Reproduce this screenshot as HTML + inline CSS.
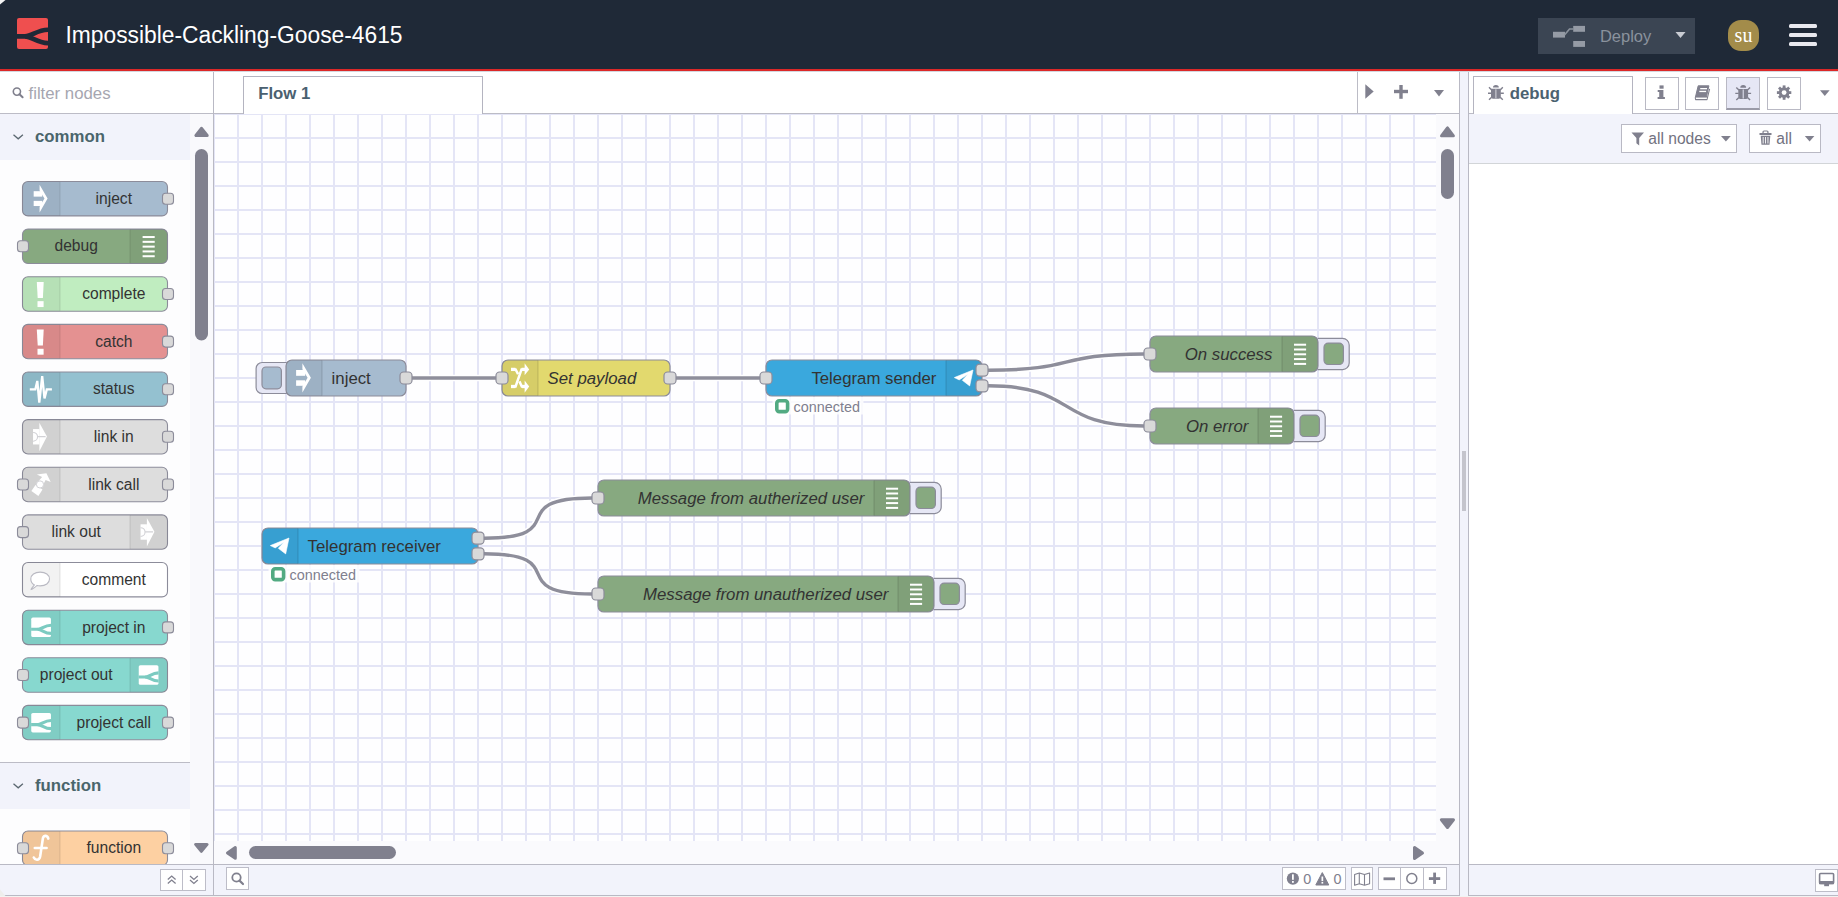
<!DOCTYPE html><html><head><meta charset="utf-8"><style>
*{box-sizing:border-box;margin:0;padding:0}
html,body{width:1838px;height:897px;overflow:hidden;background:#fff;font-family:"Liberation Sans",sans-serif}
.a{position:absolute}
svg text{font-family:"Liberation Sans",sans-serif}
</style></head><body>
<div class="a" style="left:0;top:0;width:1838px;height:69px;background:#1f2937"></div>
<div class="a" style="left:0;top:69px;width:1838px;height:2px;background:#dc2828"></div>
<svg class="a" style="left:17px;top:18px" width="31" height="31" viewBox="0 0 31 31">
<rect x="0" y="0" width="31" height="31" rx="2" fill="#ef4f4f"/>
<path d="M-1 18.35 L8 18.35 C15 18.35 20 11.75 31.5 11.75" stroke="#1f2937" stroke-width="4.7" fill="none"/>
<path d="M8 18.35 C15 18.35 20 25.15 31.5 25.15" stroke="#1f2937" stroke-width="4.7" fill="none"/>
</svg>
<div class="a" id="title" style="left:65.5px;top:20px;color:#fff;font-size:22.8px;line-height:30px;white-space:nowrap;transform:scaleY(1.08);transform-origin:0 23px">Impossible-Cackling-Goose-4615</div>
<div class="a" style="left:1538px;top:18px;width:157px;height:36px;background:#3b4553"></div>
<svg class="a" style="left:1550px;top:24px" width="40" height="26">
<rect x="3" y="7.8" width="12" height="5.8" fill="#959ba5"/>
<rect x="23.2" y="1.9" width="11.8" height="5.9" fill="#959ba5"/>
<rect x="23.2" y="17" width="11.8" height="5.9" fill="#959ba5"/>
<path d="M14.5 11 L19.5 5 L23.5 5" stroke="#8b929c" stroke-width="1.6" fill="none"/>
</svg>
<div class="a" style="left:1599.9px;top:24.9px;color:#8a929d;font-size:16.5px;line-height:22px">Deploy</div>
<svg class="a" style="left:1675px;top:31px" width="11" height="8"><path d="M0.5 1 L10.5 1 L5.5 7 Z" fill="#c9ccd3"/></svg>
<div class="a" style="left:1728px;top:20px;width:31px;height:31px;background:#a38c4a;border-radius:13px"></div>
<div class="a" style="left:1728px;top:20px;width:31px;height:31px;color:#fff;font-family:'Liberation Serif',serif;font-size:20px;line-height:31px;text-align:center">su</div>
<div class="a" style="left:1789px;top:24px;width:28px;height:4.2px;background:#e9e9ef;border-radius:1.5px"></div>
<div class="a" style="left:1789px;top:33px;width:28px;height:4.2px;background:#e9e9ef;border-radius:1.5px"></div>
<div class="a" style="left:1789px;top:41.5px;width:28px;height:4.2px;background:#e9e9ef;border-radius:1.5px"></div>
<div class="a" style="left:0;top:71px;width:213px;height:793px;background:#fdfdfe"></div>
<div class="a" style="left:0;top:71px;width:213px;height:42px;background:#fff"></div>
<div class="a" style="left:0;top:113px;width:213px;height:1px;background:#bcbcc6"></div>
<svg class="a" style="left:10px;top:84px" width="16" height="16">
<circle cx="6.9" cy="7.6" r="3.6" stroke="#7f7f8c" stroke-width="1.6" fill="none"/>
<path d="M9.5 10.2 L12.6 13.2" stroke="#7f7f8c" stroke-width="2" stroke-linecap="round"/>
</svg>
<div class="a" style="left:28.5px;top:83.5px;color:#a6a6b0;font-size:16.8px;line-height:20px">filter nodes</div>
<div class="a" style="left:190px;top:114px;width:23px;height:750px;background:#f9f9fc"></div>
<div class="a" style="left:213px;top:71px;width:1px;height:825px;background:#b9b9c4"></div>
<div class="a" style="left:0;top:114px;width:190px;height:46px;background:#f2f3fb"></div>
<svg class="a" style="left:12px;top:133px" width="12" height="8"><path d="M1.5 1.8 L6.2 5.8 L10.9 1.8" stroke="#5b6770" stroke-width="1.3" fill="none"/></svg>
<div class="a" style="left:35px;top:127px;color:#4a656b;font-weight:bold;font-size:16.8px;line-height:20px">common</div>
<div class="a" style="left:0;top:762px;width:190px;height:1px;background:#bcbcc6"></div>
<div class="a" style="left:0;top:763px;width:190px;height:46px;background:#f2f3fb"></div>
<svg class="a" style="left:12px;top:782px" width="12" height="8"><path d="M1.5 1.8 L6.2 5.8 L10.9 1.8" stroke="#5b6770" stroke-width="1.3" fill="none"/></svg>
<div class="a" style="left:35px;top:776px;color:#4a656b;font-weight:bold;font-size:16.8px;line-height:20px">function</div>
<svg class="a" style="left:190px;top:114px" width="23" height="750"><path d="M5.9 21.5 L17.2 21.5 L11.6 14.3 Z" fill="#80808e" stroke="#80808e" stroke-width="3" stroke-linejoin="round"/><rect x="5" y="35" width="13" height="191.5" rx="6.5" fill="#80808e"/><path d="M5.6 730.4 L17.1 730.4 L11.35 737.3 Z" fill="#80808e" stroke="#80808e" stroke-width="3" stroke-linejoin="round"/></svg>
<svg class="a" style="left:0;top:114px" width="190" height="750" viewBox="0 114 190 750">
<rect x="22.5" y="181.5" width="145.0" height="34.4" rx="5.5" fill="#a6bbcf" stroke="#8c8c9a" stroke-width="1.1"/><path d="M28.0 181.5 L60.0 181.5 L60.0 215.9 L28.0 215.9 Q22.5 215.9 22.5 210.4 L22.5 187.0 Q22.5 181.5 28.0 181.5 Z" fill="#000" fill-opacity="0.05"/><line x1="60.0" y1="182.0" x2="60.0" y2="215.4" stroke="#000" stroke-opacity="0.1" stroke-width="1"/><g transform="translate(41.10 198.70) scale(0.940)" fill="#fff"><rect x="-7.9" y="-8" width="9.1" height="5.8"/><rect x="-7.9" y="2.3" width="9.1" height="5.5"/><path d="M-1.6 -14.8 L6.9 -0.2 L-1.6 14.6 L-1.6 8.6 L3.6 -0.2 L-1.6 -8.8 Z"/></g><text x="113.8" y="203.8" text-anchor="middle" font-size="15.6" fill="#333">inject</text><rect x="162.5" y="193.2" width="11" height="11" rx="3" fill="#d9d9d9" stroke="#8c8c9a" stroke-width="1.1"/>
<rect x="22.5" y="229.1" width="145.0" height="34.4" rx="5.5" fill="#87a980" stroke="#8c8c9a" stroke-width="1.1"/><path d="M130.0 229.1 L162.0 229.1 Q167.5 229.1 167.5 234.6 L167.5 258.0 Q167.5 263.5 162.0 263.5 L130.0 263.5 Z" fill="#000" fill-opacity="0.05"/><line x1="130.0" y1="229.6" x2="130.0" y2="263.0" stroke="#000" stroke-opacity="0.1" stroke-width="1"/><g transform="translate(148.60 246.33) scale(1.000)" fill="#fff"><rect x="-6" y="-10.30" width="12.1" height="2"/><rect x="-6" y="-5.50" width="12.1" height="2"/><rect x="-6" y="-0.70" width="12.1" height="2"/><rect x="-6" y="4.10" width="12.1" height="2"/><rect x="-6" y="8.90" width="12.1" height="2"/></g><text x="76.2" y="251.4" text-anchor="middle" font-size="15.6" fill="#333">debug</text><rect x="17.5" y="240.8" width="11" height="11" rx="3" fill="#d9d9d9" stroke="#8c8c9a" stroke-width="1.1"/>
<rect x="22.5" y="276.8" width="145.0" height="34.4" rx="5.5" fill="#c0edc0" stroke="#8c8c9a" stroke-width="1.1"/><path d="M28.0 276.8 L60.0 276.8 L60.0 311.2 L28.0 311.2 Q22.5 311.2 22.5 305.7 L22.5 282.3 Q22.5 276.8 28.0 276.8 Z" fill="#000" fill-opacity="0.05"/><line x1="60.0" y1="277.3" x2="60.0" y2="310.7" stroke="#000" stroke-opacity="0.1" stroke-width="1"/><g transform="translate(41.10 293.96) scale(1.000)" fill="#fff"><path d="M-4.3 -12 L2.6 -12 L1.8 4 L-3.4 4 Z"/><rect x="-3.6" y="7.2" width="6.1" height="5.9"/></g><text x="113.8" y="299.1" text-anchor="middle" font-size="15.6" fill="#333">complete</text><rect x="162.5" y="288.5" width="11" height="11" rx="3" fill="#d9d9d9" stroke="#8c8c9a" stroke-width="1.1"/>
<rect x="22.5" y="324.4" width="145.0" height="34.4" rx="5.5" fill="#e49191" stroke="#8c8c9a" stroke-width="1.1"/><path d="M28.0 324.4 L60.0 324.4 L60.0 358.8 L28.0 358.8 Q22.5 358.8 22.5 353.3 L22.5 329.9 Q22.5 324.4 28.0 324.4 Z" fill="#000" fill-opacity="0.05"/><line x1="60.0" y1="324.9" x2="60.0" y2="358.3" stroke="#000" stroke-opacity="0.1" stroke-width="1"/><g transform="translate(41.10 341.59) scale(1.000)" fill="#fff"><path d="M-4.3 -12 L2.6 -12 L1.8 4 L-3.4 4 Z"/><rect x="-3.6" y="7.2" width="6.1" height="5.9"/></g><text x="113.8" y="346.7" text-anchor="middle" font-size="15.6" fill="#333">catch</text><rect x="162.5" y="336.1" width="11" height="11" rx="3" fill="#d9d9d9" stroke="#8c8c9a" stroke-width="1.1"/>
<rect x="22.5" y="372.0" width="145.0" height="34.4" rx="5.5" fill="#94c1d0" stroke="#8c8c9a" stroke-width="1.1"/><path d="M28.0 372.0 L60.0 372.0 L60.0 406.4 L28.0 406.4 Q22.5 406.4 22.5 400.9 L22.5 377.5 Q22.5 372.0 28.0 372.0 Z" fill="#000" fill-opacity="0.05"/><line x1="60.0" y1="372.5" x2="60.0" y2="405.9" stroke="#000" stroke-opacity="0.1" stroke-width="1"/><g transform="translate(41.10 389.22) scale(1.000)"><path d="M-11.3 0.2 L-5.8 0.2 L-3.8 -8.3 L-1.8 13.5 L1.1 -13 L3.4 9.2 L5.7 0.2 L10.8 0.2" stroke="#fff" stroke-width="2.3" fill="none" stroke-linejoin="miter" stroke-miterlimit="3"/></g><text x="113.8" y="394.3" text-anchor="middle" font-size="15.6" fill="#333">status</text><rect x="162.5" y="383.7" width="11" height="11" rx="3" fill="#d9d9d9" stroke="#8c8c9a" stroke-width="1.1"/>
<rect x="22.5" y="419.6" width="145.0" height="34.4" rx="5.5" fill="#dddddd" stroke="#8c8c9a" stroke-width="1.1"/><path d="M28.0 419.6 L60.0 419.6 L60.0 454.0 L28.0 454.0 Q22.5 454.0 22.5 448.5 L22.5 425.1 Q22.5 419.6 28.0 419.6 Z" fill="#000" fill-opacity="0.05"/><line x1="60.0" y1="420.1" x2="60.0" y2="453.5" stroke="#000" stroke-opacity="0.1" stroke-width="1"/><g transform="translate(41.10 436.85) scale(1.000)"><rect x="-8.05" y="-7.8" width="6.4" height="15.4" fill="#fff"/><path d="M-1.75 -14.05 L5.85 -0.25 L-1.75 14.3 Z" fill="#fff"/><path d="M-8.05 -4.4 A4.5 4.4 0 0 1 -8.05 4.4 M-3.5 -0.25 H4.5" stroke="#d2d2d6" stroke-width="1.1" fill="none"/></g><text x="113.8" y="441.9" text-anchor="middle" font-size="15.6" fill="#333">link in</text><rect x="162.5" y="431.3" width="11" height="11" rx="3" fill="#d9d9d9" stroke="#8c8c9a" stroke-width="1.1"/>
<rect x="22.5" y="467.3" width="145.0" height="34.4" rx="5.5" fill="#dddddd" stroke="#8c8c9a" stroke-width="1.1"/><path d="M28.0 467.3 L60.0 467.3 L60.0 501.7 L28.0 501.7 Q22.5 501.7 22.5 496.2 L22.5 472.8 Q22.5 467.3 28.0 467.3 Z" fill="#000" fill-opacity="0.05"/><line x1="60.0" y1="467.8" x2="60.0" y2="501.2" stroke="#000" stroke-opacity="0.1" stroke-width="1"/><g transform="translate(41.10 484.48) scale(1.000)" fill="#fff"><path d="M-9.7 6.4 L-2.7 11.45 L1.4 5.05 L-5.6 0.55 Z"/><path d="M-2.5 -3.5 L1 -7.5 L-4.2 -9.95 L5.3 -11.35 L9.6 -2.55 L4.5 -4.6 L1.8 0.8 Z"/><circle cx="-1.1" cy="-0.05" r="3.6" fill="#fff" stroke="#d2d2d6" stroke-width="1"/></g><text x="113.8" y="489.6" text-anchor="middle" font-size="15.6" fill="#333">link call</text><rect x="17.5" y="479.0" width="11" height="11" rx="3" fill="#d9d9d9" stroke="#8c8c9a" stroke-width="1.1"/><rect x="162.5" y="479.0" width="11" height="11" rx="3" fill="#d9d9d9" stroke="#8c8c9a" stroke-width="1.1"/>
<rect x="22.5" y="514.9" width="145.0" height="34.4" rx="5.5" fill="#dddddd" stroke="#8c8c9a" stroke-width="1.1"/><path d="M130.0 514.9 L162.0 514.9 Q167.5 514.9 167.5 520.4 L167.5 543.8 Q167.5 549.3 162.0 549.3 L130.0 549.3 Z" fill="#000" fill-opacity="0.05"/><line x1="130.0" y1="515.4" x2="130.0" y2="548.8" stroke="#000" stroke-opacity="0.1" stroke-width="1"/><g transform="translate(148.60 532.11) scale(1.000)"><rect x="-8.05" y="-7.8" width="6.4" height="15.4" fill="#fff"/><path d="M-1.75 -14.05 L5.85 -0.25 L-1.75 14.3 Z" fill="#fff"/><path d="M-8.05 -4.4 A4.5 4.4 0 0 1 -8.05 4.4 M-3.5 -0.25 H4.5" stroke="#d2d2d6" stroke-width="1.1" fill="none"/></g><text x="76.2" y="537.2" text-anchor="middle" font-size="15.6" fill="#333">link out</text><rect x="17.5" y="526.6" width="11" height="11" rx="3" fill="#d9d9d9" stroke="#8c8c9a" stroke-width="1.1"/>
<rect x="22.5" y="562.5" width="145.0" height="34.4" rx="5.5" fill="#ffffff" stroke="#8c8c9a" stroke-width="1.1"/><path d="M28.0 562.5 L60.0 562.5 L60.0 596.9 L28.0 596.9 Q22.5 596.9 22.5 591.4 L22.5 568.0 Q22.5 562.5 28.0 562.5 Z" fill="#000" fill-opacity="0.05"/><line x1="60.0" y1="563.0" x2="60.0" y2="596.4" stroke="#000" stroke-opacity="0.1" stroke-width="1"/><g transform="translate(41.10 579.74) scale(1.000)"><path d="M-0.95 -7.6 C4.5 -7.6 8.4 -4.8 8.4 -0.75 C8.4 3.3 4.5 6.1 -0.95 6.1 C-2 6.1 -3 6 -4 5.7 C-6 7.5 -8.5 9.6 -10 9.8 C-10.3 9.3 -9 8 -6.7 5.2 C-9 3.9 -10.3 1.8 -10.3 -0.75 C-10.3 -4.8 -6.4 -7.6 -0.95 -7.6 Z" stroke="#b9b9c2" stroke-width="1.1" fill="#fff"/></g><text x="113.8" y="584.8" text-anchor="middle" font-size="15.6" fill="#333">comment</text>
<rect x="22.5" y="610.2" width="145.0" height="34.4" rx="5.5" fill="#87d8cf" stroke="#8c8c9a" stroke-width="1.1"/><path d="M28.0 610.2 L60.0 610.2 L60.0 644.6 L28.0 644.6 Q22.5 644.6 22.5 639.1 L22.5 615.7 Q22.5 610.2 28.0 610.2 Z" fill="#000" fill-opacity="0.05"/><line x1="60.0" y1="610.7" x2="60.0" y2="644.1" stroke="#000" stroke-opacity="0.1" stroke-width="1"/><g transform="translate(41.10 627.37) scale(1.000)"><rect x="-9.85" y="-9.75" width="19.7" height="19.5" rx="1.6" fill="#fff"/><path d="M-10 1.95 L-3 1.95 C1 1.95 3 -2.1 10 -2.1" stroke="#7ccbc1" stroke-width="3.1" fill="none"/><path d="M-3.5 1.95 C1 1.95 3 6 10 6" stroke="#7ccbc1" stroke-width="3.1" fill="none"/></g><text x="113.8" y="632.5" text-anchor="middle" font-size="15.6" fill="#333">project in</text><rect x="162.5" y="621.9" width="11" height="11" rx="3" fill="#d9d9d9" stroke="#8c8c9a" stroke-width="1.1"/>
<rect x="22.5" y="657.8" width="145.0" height="34.4" rx="5.5" fill="#87d8cf" stroke="#8c8c9a" stroke-width="1.1"/><path d="M130.0 657.8 L162.0 657.8 Q167.5 657.8 167.5 663.3 L167.5 686.7 Q167.5 692.2 162.0 692.2 L130.0 692.2 Z" fill="#000" fill-opacity="0.05"/><line x1="130.0" y1="658.3" x2="130.0" y2="691.7" stroke="#000" stroke-opacity="0.1" stroke-width="1"/><g transform="translate(148.60 675.00) scale(1.000)"><rect x="-9.85" y="-9.75" width="19.7" height="19.5" rx="1.6" fill="#fff"/><path d="M-10 1.95 L-3 1.95 C1 1.95 3 -2.1 10 -2.1" stroke="#7ccbc1" stroke-width="3.1" fill="none"/><path d="M-3.5 1.95 C1 1.95 3 6 10 6" stroke="#7ccbc1" stroke-width="3.1" fill="none"/></g><text x="76.2" y="680.1" text-anchor="middle" font-size="15.6" fill="#333">project out</text><rect x="17.5" y="669.5" width="11" height="11" rx="3" fill="#d9d9d9" stroke="#8c8c9a" stroke-width="1.1"/>
<rect x="22.5" y="705.4" width="145.0" height="34.4" rx="5.5" fill="#87d8cf" stroke="#8c8c9a" stroke-width="1.1"/><path d="M28.0 705.4 L60.0 705.4 L60.0 739.8 L28.0 739.8 Q22.5 739.8 22.5 734.3 L22.5 710.9 Q22.5 705.4 28.0 705.4 Z" fill="#000" fill-opacity="0.05"/><line x1="60.0" y1="705.9" x2="60.0" y2="739.3" stroke="#000" stroke-opacity="0.1" stroke-width="1"/><g transform="translate(41.10 722.63) scale(1.000)"><rect x="-9.85" y="-9.75" width="19.7" height="19.5" rx="1.6" fill="#fff"/><path d="M-10 1.95 L-3 1.95 C1 1.95 3 -2.1 10 -2.1" stroke="#7ccbc1" stroke-width="3.1" fill="none"/><path d="M-3.5 1.95 C1 1.95 3 6 10 6" stroke="#7ccbc1" stroke-width="3.1" fill="none"/></g><text x="113.8" y="727.7" text-anchor="middle" font-size="15.6" fill="#333">project call</text><rect x="17.5" y="717.1" width="11" height="11" rx="3" fill="#d9d9d9" stroke="#8c8c9a" stroke-width="1.1"/><rect x="162.5" y="717.1" width="11" height="11" rx="3" fill="#d9d9d9" stroke="#8c8c9a" stroke-width="1.1"/>
<rect x="22.5" y="831.0" width="145.0" height="34.4" rx="5.5" fill="#fdd0a2" stroke="#8c8c9a" stroke-width="1.1"/><path d="M28.0 831.0 L60.0 831.0 L60.0 865.4 L28.0 865.4 Q22.5 865.4 22.5 859.9 L22.5 836.5 Q22.5 831.0 28.0 831.0 Z" fill="#000" fill-opacity="0.05"/><line x1="60.0" y1="831.5" x2="60.0" y2="864.9" stroke="#000" stroke-opacity="0.1" stroke-width="1"/><g transform="translate(41.10 848.20) scale(1.000)"><path d="M7.2 -9.6 C6.5 -12.8 3 -13.6 1.8 -10 L-1 8.5 C-2 12.5 -6 12.2 -7.3 9.3 M-6.3 -0.2 H5.5" stroke="#fff" stroke-width="2.6" fill="none" stroke-linecap="round"/></g><text x="113.8" y="853.3" text-anchor="middle" font-size="15.6" fill="#333">function</text><rect x="17.5" y="842.7" width="11" height="11" rx="3" fill="#d9d9d9" stroke="#8c8c9a" stroke-width="1.1"/><rect x="162.5" y="842.7" width="11" height="11" rx="3" fill="#d9d9d9" stroke="#8c8c9a" stroke-width="1.1"/>
</svg>
<div class="a" style="left:214px;top:71px;width:1245px;height:42px;background:#fff"></div>
<div class="a" style="left:214px;top:113px;width:1245px;height:1px;background:#bcbcc6"></div>
<div class="a" style="left:243px;top:76px;width:240px;height:38px;background:#fff;border:1px solid #b4b4c0;border-bottom:none"></div>
<div class="a" style="left:258.2px;top:84px;color:#4a6070;font-weight:bold;font-size:16.8px;line-height:20px">Flow 1</div>
<div class="a" style="left:1357px;top:71px;width:1px;height:42px;background:#bcbcc6"></div>
<svg class="a" style="left:1358px;top:71px" width="101" height="42"><path d="M7.3 13.3 L15.7 20.5 L7.3 27.8 Z" fill="#80808e"/><rect x="36" y="18.8" width="14" height="3.4" fill="#80808e"/><rect x="41.3" y="14" width="3.4" height="13.8" fill="#80808e"/><path d="M76 19 L86 19 L81 25.5 Z" fill="#80808e"/></svg>
<svg class="a" style="left:214px;top:114px" width="1245" height="750" viewBox="214 114 1245 750">
<rect x="214" y="114" width="1245" height="750" fill="#fafafd"/>
<rect x="214" y="114" width="1222" height="727" fill="#fefeff"/>
<rect x="213" y="114" width="2" height="727" fill="#e4e5f6"/><rect x="237" y="114" width="2" height="727" fill="#e4e5f6"/><rect x="261" y="114" width="2" height="727" fill="#e4e5f6"/><rect x="285" y="114" width="2" height="727" fill="#e4e5f6"/><rect x="309" y="114" width="2" height="727" fill="#e4e5f6"/><rect x="333" y="114" width="2" height="727" fill="#e4e5f6"/><rect x="357" y="114" width="2" height="727" fill="#e4e5f6"/><rect x="381" y="114" width="2" height="727" fill="#e4e5f6"/><rect x="405" y="114" width="2" height="727" fill="#e4e5f6"/><rect x="429" y="114" width="2" height="727" fill="#e4e5f6"/><rect x="453" y="114" width="2" height="727" fill="#e4e5f6"/><rect x="477" y="114" width="2" height="727" fill="#e4e5f6"/><rect x="501" y="114" width="2" height="727" fill="#e4e5f6"/><rect x="525" y="114" width="2" height="727" fill="#e4e5f6"/><rect x="549" y="114" width="2" height="727" fill="#e4e5f6"/><rect x="573" y="114" width="2" height="727" fill="#e4e5f6"/><rect x="597" y="114" width="2" height="727" fill="#e4e5f6"/><rect x="621" y="114" width="2" height="727" fill="#e4e5f6"/><rect x="645" y="114" width="2" height="727" fill="#e4e5f6"/><rect x="669" y="114" width="2" height="727" fill="#e4e5f6"/><rect x="693" y="114" width="2" height="727" fill="#e4e5f6"/><rect x="717" y="114" width="2" height="727" fill="#e4e5f6"/><rect x="741" y="114" width="2" height="727" fill="#e4e5f6"/><rect x="765" y="114" width="2" height="727" fill="#e4e5f6"/><rect x="789" y="114" width="2" height="727" fill="#e4e5f6"/><rect x="813" y="114" width="2" height="727" fill="#e4e5f6"/><rect x="837" y="114" width="2" height="727" fill="#e4e5f6"/><rect x="861" y="114" width="2" height="727" fill="#e4e5f6"/><rect x="885" y="114" width="2" height="727" fill="#e4e5f6"/><rect x="909" y="114" width="2" height="727" fill="#e4e5f6"/><rect x="933" y="114" width="2" height="727" fill="#e4e5f6"/><rect x="957" y="114" width="2" height="727" fill="#e4e5f6"/><rect x="981" y="114" width="2" height="727" fill="#e4e5f6"/><rect x="1005" y="114" width="2" height="727" fill="#e4e5f6"/><rect x="1029" y="114" width="2" height="727" fill="#e4e5f6"/><rect x="1053" y="114" width="2" height="727" fill="#e4e5f6"/><rect x="1077" y="114" width="2" height="727" fill="#e4e5f6"/><rect x="1101" y="114" width="2" height="727" fill="#e4e5f6"/><rect x="1125" y="114" width="2" height="727" fill="#e4e5f6"/><rect x="1149" y="114" width="2" height="727" fill="#e4e5f6"/><rect x="1173" y="114" width="2" height="727" fill="#e4e5f6"/><rect x="1197" y="114" width="2" height="727" fill="#e4e5f6"/><rect x="1221" y="114" width="2" height="727" fill="#e4e5f6"/><rect x="1245" y="114" width="2" height="727" fill="#e4e5f6"/><rect x="1269" y="114" width="2" height="727" fill="#e4e5f6"/><rect x="1293" y="114" width="2" height="727" fill="#e4e5f6"/><rect x="1317" y="114" width="2" height="727" fill="#e4e5f6"/><rect x="1341" y="114" width="2" height="727" fill="#e4e5f6"/><rect x="1365" y="114" width="2" height="727" fill="#e4e5f6"/><rect x="1389" y="114" width="2" height="727" fill="#e4e5f6"/><rect x="1413" y="114" width="2" height="727" fill="#e4e5f6"/><rect x="214" y="113" width="1222" height="2" fill="#e4e5f6"/><rect x="214" y="137" width="1222" height="2" fill="#e4e5f6"/><rect x="214" y="161" width="1222" height="2" fill="#e4e5f6"/><rect x="214" y="185" width="1222" height="2" fill="#e4e5f6"/><rect x="214" y="209" width="1222" height="2" fill="#e4e5f6"/><rect x="214" y="233" width="1222" height="2" fill="#e4e5f6"/><rect x="214" y="257" width="1222" height="2" fill="#e4e5f6"/><rect x="214" y="281" width="1222" height="2" fill="#e4e5f6"/><rect x="214" y="305" width="1222" height="2" fill="#e4e5f6"/><rect x="214" y="329" width="1222" height="2" fill="#e4e5f6"/><rect x="214" y="353" width="1222" height="2" fill="#e4e5f6"/><rect x="214" y="377" width="1222" height="2" fill="#e4e5f6"/><rect x="214" y="401" width="1222" height="2" fill="#e4e5f6"/><rect x="214" y="425" width="1222" height="2" fill="#e4e5f6"/><rect x="214" y="449" width="1222" height="2" fill="#e4e5f6"/><rect x="214" y="473" width="1222" height="2" fill="#e4e5f6"/><rect x="214" y="497" width="1222" height="2" fill="#e4e5f6"/><rect x="214" y="521" width="1222" height="2" fill="#e4e5f6"/><rect x="214" y="545" width="1222" height="2" fill="#e4e5f6"/><rect x="214" y="569" width="1222" height="2" fill="#e4e5f6"/><rect x="214" y="593" width="1222" height="2" fill="#e4e5f6"/><rect x="214" y="617" width="1222" height="2" fill="#e4e5f6"/><rect x="214" y="641" width="1222" height="2" fill="#e4e5f6"/><rect x="214" y="665" width="1222" height="2" fill="#e4e5f6"/><rect x="214" y="689" width="1222" height="2" fill="#e4e5f6"/><rect x="214" y="713" width="1222" height="2" fill="#e4e5f6"/><rect x="214" y="737" width="1222" height="2" fill="#e4e5f6"/><rect x="214" y="761" width="1222" height="2" fill="#e4e5f6"/><rect x="214" y="785" width="1222" height="2" fill="#e4e5f6"/><rect x="214" y="809" width="1222" height="2" fill="#e4e5f6"/><rect x="214" y="833" width="1222" height="2" fill="#e4e5f6"/>
<path d="M412.0 378.0 C502.0 378.0 410.0 378.0 500.0 378.0" stroke="#fefeff" stroke-width="6.5" fill="none"/><path d="M412.0 378.0 C502.0 378.0 410.0 378.0 500.0 378.0" stroke="#8e8e9b" stroke-width="3.4" fill="none"/>
<path d="M670.0 378.0 C760.0 378.0 670.0 378.0 760.0 378.0" stroke="#fefeff" stroke-width="6.5" fill="none"/><path d="M670.0 378.0 C760.0 378.0 670.0 378.0 760.0 378.0" stroke="#8e8e9b" stroke-width="3.4" fill="none"/>
<path d="M988.0 370.2 C1078.0 370.2 1054.0 354.0 1144.0 354.0" stroke="#fefeff" stroke-width="6.5" fill="none"/><path d="M988.0 370.2 C1078.0 370.2 1054.0 354.0 1144.0 354.0" stroke="#8e8e9b" stroke-width="3.4" fill="none"/>
<path d="M988.0 385.8 C1078.0 385.8 1054.0 426.0 1144.0 426.0" stroke="#fefeff" stroke-width="6.5" fill="none"/><path d="M988.0 385.8 C1078.0 385.8 1054.0 426.0 1144.0 426.0" stroke="#8e8e9b" stroke-width="3.4" fill="none"/>
<path d="M484.0 538.2 C574.0 538.2 502.0 498.0 592.0 498.0" stroke="#fefeff" stroke-width="6.5" fill="none"/><path d="M484.0 538.2 C574.0 538.2 502.0 498.0 592.0 498.0" stroke="#8e8e9b" stroke-width="3.4" fill="none"/>
<path d="M484.0 553.8 C574.0 553.8 502.0 594.0 592.0 594.0" stroke="#fefeff" stroke-width="6.5" fill="none"/><path d="M484.0 553.8 C574.0 553.8 502.0 594.0 592.0 594.0" stroke="#8e8e9b" stroke-width="3.4" fill="none"/>
<rect x="256.1" y="362.5" width="35.5" height="31" rx="6" fill="#e6e7f5" stroke="#8c8c9a" stroke-width="1.2"/>
<rect x="262" y="367" width="19.4" height="21.8" rx="4" fill="#a6bbcf" stroke="#8c8c9a" stroke-width="1.2"/>
<rect x="286.00" y="360.00" width="120.00" height="36" rx="6" fill="#a6bbcf" stroke="#8c8c9a" stroke-width="1.2"/><path d="M292.00 360.00 h30 v36 h-30 a6 6 0 0 1 -6 -6 v-24 a6 6 0 0 1 6 -6 Z" fill="#000" fill-opacity="0.05"/><line x1="322.00" y1="360.60" x2="322.00" y2="395.40" stroke="#000" stroke-opacity="0.12" stroke-width="1.2"/><g transform="translate(304.00 378.00) scale(1.000)" fill="#fff"><rect x="-7.9" y="-8" width="9.1" height="5.8"/><rect x="-7.9" y="2.3" width="9.1" height="5.5"/><path d="M-1.6 -14.8 L6.9 -0.2 L-1.6 14.6 L-1.6 8.6 L3.6 -0.2 L-1.6 -8.8 Z"/></g><text x="331.60" y="384.00" text-anchor="start" font-size="16.8" fill="#333">inject</text><rect x="400.00" y="372.00" width="12" height="12" rx="3.6" fill="#d9d9d9" stroke="#8c8c9a" stroke-width="1.2"/>
<rect x="502.00" y="360.00" width="168.00" height="36" rx="6" fill="#e2d96e" stroke="#8c8c9a" stroke-width="1.2"/><path d="M508.00 360.00 h30 v36 h-30 a6 6 0 0 1 -6 -6 v-24 a6 6 0 0 1 6 -6 Z" fill="#000" fill-opacity="0.05"/><line x1="538.00" y1="360.60" x2="538.00" y2="395.40" stroke="#000" stroke-opacity="0.12" stroke-width="1.2"/><g transform="translate(520.00 378.00) scale(1.000)" stroke="#fff" fill="none" stroke-width="3.3"><path d="M-9 8.5 H-4.6"/><path d="M-9 -8.6 H-4.6"/><path d="M1.6 -8.6 H5.2"/><path d="M1.9 8.5 H5.2"/><path d="M-5.6 8.5 L-4.4 8.5 L1.5 -8.6 L2.6 -8.6" stroke-width="2.5"/><path d="M-5.6 -8.6 L-4.4 -8.6 L-1.9 -3.8" stroke-width="2.5"/><path d="M-0.6 3.4 L1.8 8.5 L2.8 8.5" stroke-width="2.5"/><path d="M4.6 -14.7 L9.2 -8.6 L4.6 -2.7 Z" fill="#fff" stroke="none"/><path d="M4.6 2.4 L9.2 8.5 L4.6 14.8 Z" fill="#fff" stroke="none"/></g><text x="547.60" y="384.00" text-anchor="start" font-size="16.8" fill="#333" font-style="italic">Set payload</text><rect x="496.00" y="372.00" width="12" height="12" rx="3.6" fill="#d9d9d9" stroke="#8c8c9a" stroke-width="1.2"/><rect x="664.00" y="372.00" width="12" height="12" rx="3.6" fill="#d9d9d9" stroke="#8c8c9a" stroke-width="1.2"/>
<rect x="766.00" y="360.00" width="216.00" height="36" rx="6" fill="#3aa8dd" stroke="#8c8c9a" stroke-width="1.2"/><path d="M946.00 360.00 h30 a6 6 0 0 1 6 6 v24 a6 6 0 0 1 -6 6 h-30 Z" fill="#000" fill-opacity="0.05"/><line x1="946.00" y1="360.60" x2="946.00" y2="395.40" stroke="#000" stroke-opacity="0.12" stroke-width="1.2"/><g transform="translate(964.00 378.00) scale(1.000)" fill="#fff"><path d="M-9.7 -0.4 L9 -8 L5.7 7.9 L-1.7 2.3 L3.9 -3.7 L-4.8 1.9 Z" stroke="#fff" stroke-width="0.6" stroke-linejoin="round"/></g><text x="936.40" y="384.00" text-anchor="end" font-size="16.8" fill="#333">Telegram sender</text><rect x="760.00" y="372.00" width="12" height="12" rx="3.6" fill="#d9d9d9" stroke="#8c8c9a" stroke-width="1.2"/><rect x="976.00" y="364.20" width="12" height="12" rx="3.6" fill="#d9d9d9" stroke="#8c8c9a" stroke-width="1.2"/><rect x="976.00" y="379.80" width="12" height="12" rx="3.6" fill="#d9d9d9" stroke="#8c8c9a" stroke-width="1.2"/>
<rect x="772.50" y="397.00" width="91" height="17.5" fill="#fff" fill-opacity="0.8"/><rect x="776.80" y="400.80" width="10.8" height="10.8" rx="2.4" fill="#fff" stroke="#52aa82" stroke-width="3.6"/><text x="793.60" y="412.00" font-size="14.4" fill="#80808e">connected</text>
<path d="M1317.60 338.40 h25 a6.6 6.6 0 0 1 6.6 6.6 v18 a6.6 6.6 0 0 1 -6.6 6.6 h-25" fill="#e6e7f5" stroke="#8c8c9a" stroke-width="1.2"/><rect x="1324.00" y="343.10" width="19.4" height="21.4" rx="4.2" fill="#87a980" stroke="#8c8c9a" stroke-width="1.2"/>
<rect x="1150.00" y="336.00" width="168.00" height="36" rx="6" fill="#87a980" stroke="#8c8c9a" stroke-width="1.2"/><path d="M1282.00 336.00 h30 a6 6 0 0 1 6 6 v24 a6 6 0 0 1 -6 6 h-30 Z" fill="#000" fill-opacity="0.05"/><line x1="1282.00" y1="336.60" x2="1282.00" y2="371.40" stroke="#000" stroke-opacity="0.12" stroke-width="1.2"/><g transform="translate(1300.00 354.00) scale(1.000)" fill="#fff"><rect x="-6" y="-10.30" width="12.1" height="2"/><rect x="-6" y="-5.50" width="12.1" height="2"/><rect x="-6" y="-0.70" width="12.1" height="2"/><rect x="-6" y="4.10" width="12.1" height="2"/><rect x="-6" y="8.90" width="12.1" height="2"/></g><text x="1272.40" y="360.00" text-anchor="end" font-size="16.8" fill="#333" font-style="italic">On success</text><rect x="1144.00" y="348.00" width="12" height="12" rx="3.6" fill="#d9d9d9" stroke="#8c8c9a" stroke-width="1.2"/>
<path d="M1293.60 410.40 h25 a6.6 6.6 0 0 1 6.6 6.6 v18 a6.6 6.6 0 0 1 -6.6 6.6 h-25" fill="#e6e7f5" stroke="#8c8c9a" stroke-width="1.2"/><rect x="1300.00" y="415.10" width="19.4" height="21.4" rx="4.2" fill="#87a980" stroke="#8c8c9a" stroke-width="1.2"/>
<rect x="1150.00" y="408.00" width="144.00" height="36" rx="6" fill="#87a980" stroke="#8c8c9a" stroke-width="1.2"/><path d="M1258.00 408.00 h30 a6 6 0 0 1 6 6 v24 a6 6 0 0 1 -6 6 h-30 Z" fill="#000" fill-opacity="0.05"/><line x1="1258.00" y1="408.60" x2="1258.00" y2="443.40" stroke="#000" stroke-opacity="0.12" stroke-width="1.2"/><g transform="translate(1276.00 426.00) scale(1.000)" fill="#fff"><rect x="-6" y="-10.30" width="12.1" height="2"/><rect x="-6" y="-5.50" width="12.1" height="2"/><rect x="-6" y="-0.70" width="12.1" height="2"/><rect x="-6" y="4.10" width="12.1" height="2"/><rect x="-6" y="8.90" width="12.1" height="2"/></g><text x="1248.40" y="432.00" text-anchor="end" font-size="16.8" fill="#333" font-style="italic">On error</text><rect x="1144.00" y="420.00" width="12" height="12" rx="3.6" fill="#d9d9d9" stroke="#8c8c9a" stroke-width="1.2"/>
<rect x="262.00" y="528.00" width="216.00" height="36" rx="6" fill="#3aa8dd" stroke="#8c8c9a" stroke-width="1.2"/><path d="M268.00 528.00 h30 v36 h-30 a6 6 0 0 1 -6 -6 v-24 a6 6 0 0 1 6 -6 Z" fill="#000" fill-opacity="0.05"/><line x1="298.00" y1="528.60" x2="298.00" y2="563.40" stroke="#000" stroke-opacity="0.12" stroke-width="1.2"/><g transform="translate(280.00 546.00) scale(1.000)" fill="#fff"><path d="M-9.7 -0.4 L9 -8 L5.7 7.9 L-1.7 2.3 L3.9 -3.7 L-4.8 1.9 Z" stroke="#fff" stroke-width="0.6" stroke-linejoin="round"/></g><text x="307.60" y="552.00" text-anchor="start" font-size="16.8" fill="#333">Telegram receiver</text><rect x="472.00" y="532.20" width="12" height="12" rx="3.6" fill="#d9d9d9" stroke="#8c8c9a" stroke-width="1.2"/><rect x="472.00" y="547.80" width="12" height="12" rx="3.6" fill="#d9d9d9" stroke="#8c8c9a" stroke-width="1.2"/>
<rect x="268.50" y="565.00" width="91" height="17.5" fill="#fff" fill-opacity="0.8"/><rect x="272.80" y="568.80" width="10.8" height="10.8" rx="2.4" fill="#fff" stroke="#52aa82" stroke-width="3.6"/><text x="289.60" y="580.00" font-size="14.4" fill="#80808e">connected</text>
<path d="M909.60 482.40 h25 a6.6 6.6 0 0 1 6.6 6.6 v18 a6.6 6.6 0 0 1 -6.6 6.6 h-25" fill="#e6e7f5" stroke="#8c8c9a" stroke-width="1.2"/><rect x="916.00" y="487.10" width="19.4" height="21.4" rx="4.2" fill="#87a980" stroke="#8c8c9a" stroke-width="1.2"/>
<rect x="598.00" y="480.00" width="312.00" height="36" rx="6" fill="#87a980" stroke="#8c8c9a" stroke-width="1.2"/><path d="M874.00 480.00 h30 a6 6 0 0 1 6 6 v24 a6 6 0 0 1 -6 6 h-30 Z" fill="#000" fill-opacity="0.05"/><line x1="874.00" y1="480.60" x2="874.00" y2="515.40" stroke="#000" stroke-opacity="0.12" stroke-width="1.2"/><g transform="translate(892.00 498.00) scale(1.000)" fill="#fff"><rect x="-6" y="-10.30" width="12.1" height="2"/><rect x="-6" y="-5.50" width="12.1" height="2"/><rect x="-6" y="-0.70" width="12.1" height="2"/><rect x="-6" y="4.10" width="12.1" height="2"/><rect x="-6" y="8.90" width="12.1" height="2"/></g><text x="864.40" y="504.00" text-anchor="end" font-size="16.8" fill="#333" font-style="italic">Message from autherized user</text><rect x="592.00" y="492.00" width="12" height="12" rx="3.6" fill="#d9d9d9" stroke="#8c8c9a" stroke-width="1.2"/>
<path d="M933.60 578.40 h25 a6.6 6.6 0 0 1 6.6 6.6 v18 a6.6 6.6 0 0 1 -6.6 6.6 h-25" fill="#e6e7f5" stroke="#8c8c9a" stroke-width="1.2"/><rect x="940.00" y="583.10" width="19.4" height="21.4" rx="4.2" fill="#87a980" stroke="#8c8c9a" stroke-width="1.2"/>
<rect x="598.00" y="576.00" width="336.00" height="36" rx="6" fill="#87a980" stroke="#8c8c9a" stroke-width="1.2"/><path d="M898.00 576.00 h30 a6 6 0 0 1 6 6 v24 a6 6 0 0 1 -6 6 h-30 Z" fill="#000" fill-opacity="0.05"/><line x1="898.00" y1="576.60" x2="898.00" y2="611.40" stroke="#000" stroke-opacity="0.12" stroke-width="1.2"/><g transform="translate(916.00 594.00) scale(1.000)" fill="#fff"><rect x="-6" y="-10.30" width="12.1" height="2"/><rect x="-6" y="-5.50" width="12.1" height="2"/><rect x="-6" y="-0.70" width="12.1" height="2"/><rect x="-6" y="4.10" width="12.1" height="2"/><rect x="-6" y="8.90" width="12.1" height="2"/></g><text x="888.40" y="600.00" text-anchor="end" font-size="16.8" fill="#333" font-style="italic">Message from unautherized user</text><rect x="592.00" y="588.00" width="12" height="12" rx="3.6" fill="#d9d9d9" stroke="#8c8c9a" stroke-width="1.2"/>
<path d="M1441.5 135.8 L1453.4 135.8 L1447.45 127.9 Z" fill="#80808e" stroke="#80808e" stroke-width="3" stroke-linejoin="round"/>
<rect x="1441" y="149" width="13" height="50" rx="6.5" fill="#80808e"/>
<path d="M1441.4 819.8 L1453.5 819.8 L1447.45 827.5 Z" fill="#80808e" stroke="#80808e" stroke-width="3" stroke-linejoin="round"/>
<path d="M235.3 847.5 L235.3 858.3 L227.5 852.9 Z" fill="#80808e" stroke="#80808e" stroke-width="3" stroke-linejoin="round"/>
<rect x="249" y="846" width="147" height="13" rx="6.5" fill="#80808e"/>
<path d="M1414.5 847.5 L1414.5 858.5 L1422.5 853 Z" fill="#80808e" stroke="#80808e" stroke-width="3" stroke-linejoin="round"/>
</svg>
<div class="a" style="left:1459px;top:71px;width:10px;height:794px;background:#f2f3fb"></div>
<div class="a" style="left:1459px;top:71px;width:1px;height:825px;background:#b9b9c4"></div>
<div class="a" style="left:1468px;top:71px;width:1px;height:825px;background:#b9b9c4"></div>
<div class="a" style="left:1462px;top:451px;width:4px;height:60px;background:#c4c4cc"></div>
<div class="a" style="left:1469px;top:71px;width:369px;height:42px;background:#fff"></div>
<div class="a" style="left:1469px;top:113px;width:369px;height:1px;background:#bcbcc6"></div>
<div class="a" style="left:1473px;top:76px;width:160px;height:38px;background:#fff;border:1px solid #b4b4c0;border-bottom:none"></div>
<svg class="a" style="left:1480px;top:80px" width="30" height="26"><g transform="translate(15.90 13.80) scale(1.00)"><path d="M-2.95 -6.2 A2.95 2.7 0 0 1 2.95 -6.2 Z" fill="#80808e"/><path d="M-4.9 -5 H4.9 V3.05 A2 2 0 0 1 2.9 5.05 H-2.9 A2 2 0 0 1 -4.9 3.05 Z" fill="#80808e"/><path d="M-6.9 -6.5 L-4.3 -3.9 M6.9 -6.5 L4.3 -3.9 M-7.9 -0.6 H-4.5 M7.9 -0.6 H4.5 M-6.9 6 L-4.3 3.4 M6.9 6 L4.3 3.4" stroke="#80808e" stroke-width="1.4"/><rect x="-0.5" y="-4.5" width="1" height="9" fill="#d8d8de"/></g></svg>
<div class="a" style="left:1509.7px;top:84px;color:#4b6270;font-weight:bold;font-size:16.8px;line-height:20px">debug</div>
<div class="a" style="left:1645px;top:77px;width:33.5px;height:32.5px;background:#fff;border:1px solid #b9b9c4;"></div>
<div class="a" style="left:1685px;top:77px;width:33.5px;height:32.5px;background:#fff;border:1px solid #b9b9c4;"></div>
<div class="a" style="left:1726px;top:77px;width:33.5px;height:32.5px;background:#e6e7f5;border:1px solid #b9b9c4;border-bottom:2px solid #9a9aa8;"></div>
<div class="a" style="left:1767px;top:77px;width:33.5px;height:32.5px;background:#fff;border:1px solid #b9b9c4;"></div>
<svg class="a" style="left:1645px;top:77px" width="190" height="33"><g fill="#80808e"><rect x="14.5" y="8.4" width="4.1" height="3.3"/><path d="M12.7 13 h5.7 v6.9 h1.5 v2 h-7.3 v-2 h1.6 v-4.9 h-1.5 Z"/><path d="M53.2 8.8 H63.9 L61.3 20.6 H50.3 Z" stroke="#80808e" stroke-width="1" stroke-linejoin="round"/><path d="M50.3 20.6 L50.6 22.6 H62 L64.6 11.8" stroke="#80808e" stroke-width="1.1" fill="none" stroke-linejoin="round"/></g><rect x="55.2" y="11" width="6.8" height="1.3" fill="#fff"/><rect x="54.3" y="13.8" width="6.8" height="1.3" fill="#fff"/><rect x="50.9" y="20.6" width="10.6" height="1.3" fill="#fff"/><g transform="translate(98.20 17.00) scale(1.00)"><path d="M-2.95 -6.2 A2.95 2.7 0 0 1 2.95 -6.2 Z" fill="#80808e"/><path d="M-4.9 -5 H4.9 V3.05 A2 2 0 0 1 2.9 5.05 H-2.9 A2 2 0 0 1 -4.9 3.05 Z" fill="#80808e"/><path d="M-6.9 -6.5 L-4.3 -3.9 M6.9 -6.5 L4.3 -3.9 M-7.9 -0.6 H-4.5 M7.9 -0.6 H4.5 M-6.9 6 L-4.3 3.4 M6.9 6 L4.3 3.4" stroke="#80808e" stroke-width="1.4"/><rect x="-0.5" y="-4.5" width="1" height="9" fill="#e6e7f5"/></g><g transform="translate(139.1 15.6)" fill="#80808e"><circle r="5.3"/><g><rect x="-1.4" y="-7.2" width="2.8" height="14.4"/><rect x="-1.4" y="-7.2" width="2.8" height="14.4" transform="rotate(45)"/><rect x="-1.4" y="-7.2" width="2.8" height="14.4" transform="rotate(90)"/><rect x="-1.4" y="-7.2" width="2.8" height="14.4" transform="rotate(135)"/></g><circle r="2.4" fill="#fff"/></g><path d="M175 13.2 L184.6 13.2 L179.8 19 Z" fill="#80808e"/></svg>
<div class="a" style="left:1469px;top:114px;width:369px;height:49px;background:#f2f3fb"></div>
<div class="a" style="left:1469px;top:163px;width:369px;height:1px;background:#d2d5d8"></div>
<div class="a" style="left:1621px;top:124px;width:116px;height:29px;background:#fff;border:1px solid #b9b9c4"></div>
<div class="a" style="left:1749px;top:124px;width:72px;height:29px;background:#fff;border:1px solid #b9b9c4"></div>
<svg class="a" style="left:1621px;top:124px" width="200" height="29">
<path d="M10.5 8.5 h12.5 l-4.8 5.5 v7.5 l-2.8 -2.3 v-5.2 Z" fill="#80808e"/>
<path d="M100 12 h9.8 l-4.9 5.5 Z" fill="#80808e"/>
<g fill="#80808e"><rect x="138.5" y="9" width="12" height="2"/><rect x="142" y="7" width="5" height="2.5" rx="1" fill="none" stroke="#80808e" stroke-width="1.2"/>
<path d="M139.7 11.8 h9.6 l-0.8 9 h-8 Z"/></g>
<g fill="#fff"><rect x="141.7" y="13" width="0.9" height="6.5"/><rect x="144.1" y="13" width="0.9" height="6.5"/><rect x="146.5" y="13" width="0.9" height="6.5"/></g>
<path d="M183.8 12 h9.6 l-4.8 5.5 Z" fill="#80808e"/>
</svg>
<div class="a" style="left:1648.3px;top:128.5px;color:#72727f;font-size:15.6px;line-height:20px">all nodes</div>
<div class="a" style="left:1776.3px;top:128.5px;color:#72727f;font-size:15.6px;line-height:20px">all</div>
<div class="a" style="left:0;top:864px;width:1838px;height:33px;background:#f2f3fb"></div>
<div class="a" style="left:0;top:864px;width:1838px;height:1px;background:#b9b9c4"></div>
<div class="a" style="left:0;top:895px;width:1838px;height:1px;background:#b9b9c4"></div>
<div class="a" style="left:0;top:896px;width:1838px;height:1px;background:#f3f3f1"></div>
<div class="a" style="left:0;top:71px;width:1838px;height:1px;background:#d3d7de"></div>
<svg class="a" style="left:0;top:0" width="8" height="8"><path d="M0 0 H5.5 L0 4.5 Z" fill="#f4f4f4"/></svg>
<svg class="a" style="left:0;top:889px" width="8" height="8"><path d="M0 0.5 L5.5 7 H0 Z" fill="#eeeeec"/></svg>
<div class="a" style="left:213px;top:864px;width:1px;height:32px;background:#b9b9c4"></div>
<div class="a" style="left:1459px;top:864px;width:10px;height:32px;background:#f2f3fb;border-left:1px solid #b9b9c4;border-right:1px solid #b9b9c4"></div>
<div class="a" style="left:160px;top:869px;width:23px;height:22px;background:#fff;border:1px solid #bdbdc8"></div>
<div class="a" style="left:182px;top:869px;width:24px;height:22px;background:#fff;border:1px solid #bdbdc8"></div>
<div class="a" style="left:226px;top:867px;width:23px;height:23px;background:#fff;border:1px solid #bdbdc8"></div>
<div class="a" style="left:1282px;top:867px;width:64px;height:23px;background:#fff;border:1px solid #bdbdc8"></div>
<div class="a" style="left:1351px;top:867px;width:22px;height:23px;background:#fff;border:1px solid #bdbdc8"></div>
<div class="a" style="left:1378px;top:867px;width:23px;height:23px;background:#fff;border:1px solid #bdbdc8"></div>
<div class="a" style="left:1400px;top:867px;width:24px;height:23px;background:#fff;border:1px solid #bdbdc8"></div>
<div class="a" style="left:1423px;top:867px;width:24px;height:23px;background:#fff;border:1px solid #bdbdc8"></div>
<div class="a" style="left:1815px;top:869px;width:23px;height:23px;background:#fff;border:1px solid #bdbdc8"></div>
<svg class="a" style="left:0;top:864px" width="1838" height="33">
<g stroke="#80808e" stroke-width="1.3" fill="none">
<path d="M167.8 15.5 L171.7 12 L175.6 15.5 M167.8 19.5 L171.7 16 L175.6 19.5"/>
<path d="M190 12 L193.9 15.5 L197.8 12 M190 16 L193.9 19.5 L197.8 16"/>
</g>
<circle cx="236.5" cy="13.5" r="4.2" stroke="#80808e" stroke-width="1.8" fill="none"/>
<path d="M239.5 16.6 L243 20" stroke="#80808e" stroke-width="2.2" stroke-linecap="round"/>
<circle cx="1292.9" cy="14.6" r="6.1" fill="#80808e"/>
<rect x="1292" y="10.3" width="1.8" height="5.5" fill="#fff"/><rect x="1292" y="17" width="1.8" height="1.8" fill="#fff"/>
<path d="M1315.8 21 L1322.3 8.6 L1328.8 21 Z" fill="#80808e" stroke="#80808e" stroke-width="1" stroke-linejoin="round"/>
<rect x="1321.5" y="12.5" width="1.7" height="4.6" fill="#fff"/><rect x="1321.5" y="18" width="1.7" height="1.6" fill="#fff"/>
<path d="M1354.6 10.5 L1359.3 9 L1364.5 10.5 L1369.6 9 V19.8 L1364.5 21.3 L1359.3 19.8 L1354.6 21.3 Z M1359.3 9 V19.8 M1364.5 10.5 V21.3" stroke="#80808e" stroke-width="1.1" fill="none" stroke-linejoin="round"/>
<rect x="1383.5" y="13.4" width="11.5" height="2.8" fill="#80808e"/>
<circle cx="1411.8" cy="14.5" r="5" stroke="#80808e" stroke-width="1.5" fill="none"/>
<rect x="1428.9" y="13.2" width="11.3" height="2.8" fill="#80808e"/><rect x="1433.2" y="8.6" width="2.8" height="11.3" fill="#80808e"/>
<rect x="1819.6" y="9.5" width="14" height="10" rx="1" fill="none" stroke="#80808e" stroke-width="1.6"/>
<rect x="1819" y="17" width="15" height="3.2" fill="#80808e"/>
<rect x="1824.2" y="20" width="4.8" height="2.2" fill="#80808e"/>
</svg>
<div class="a" style="left:1303.3px;top:869px;color:#80808e;font-size:14.4px;line-height:20px">0</div>
<div class="a" style="left:1333.6px;top:869px;color:#80808e;font-size:14.4px;line-height:20px">0</div>
</body></html>
